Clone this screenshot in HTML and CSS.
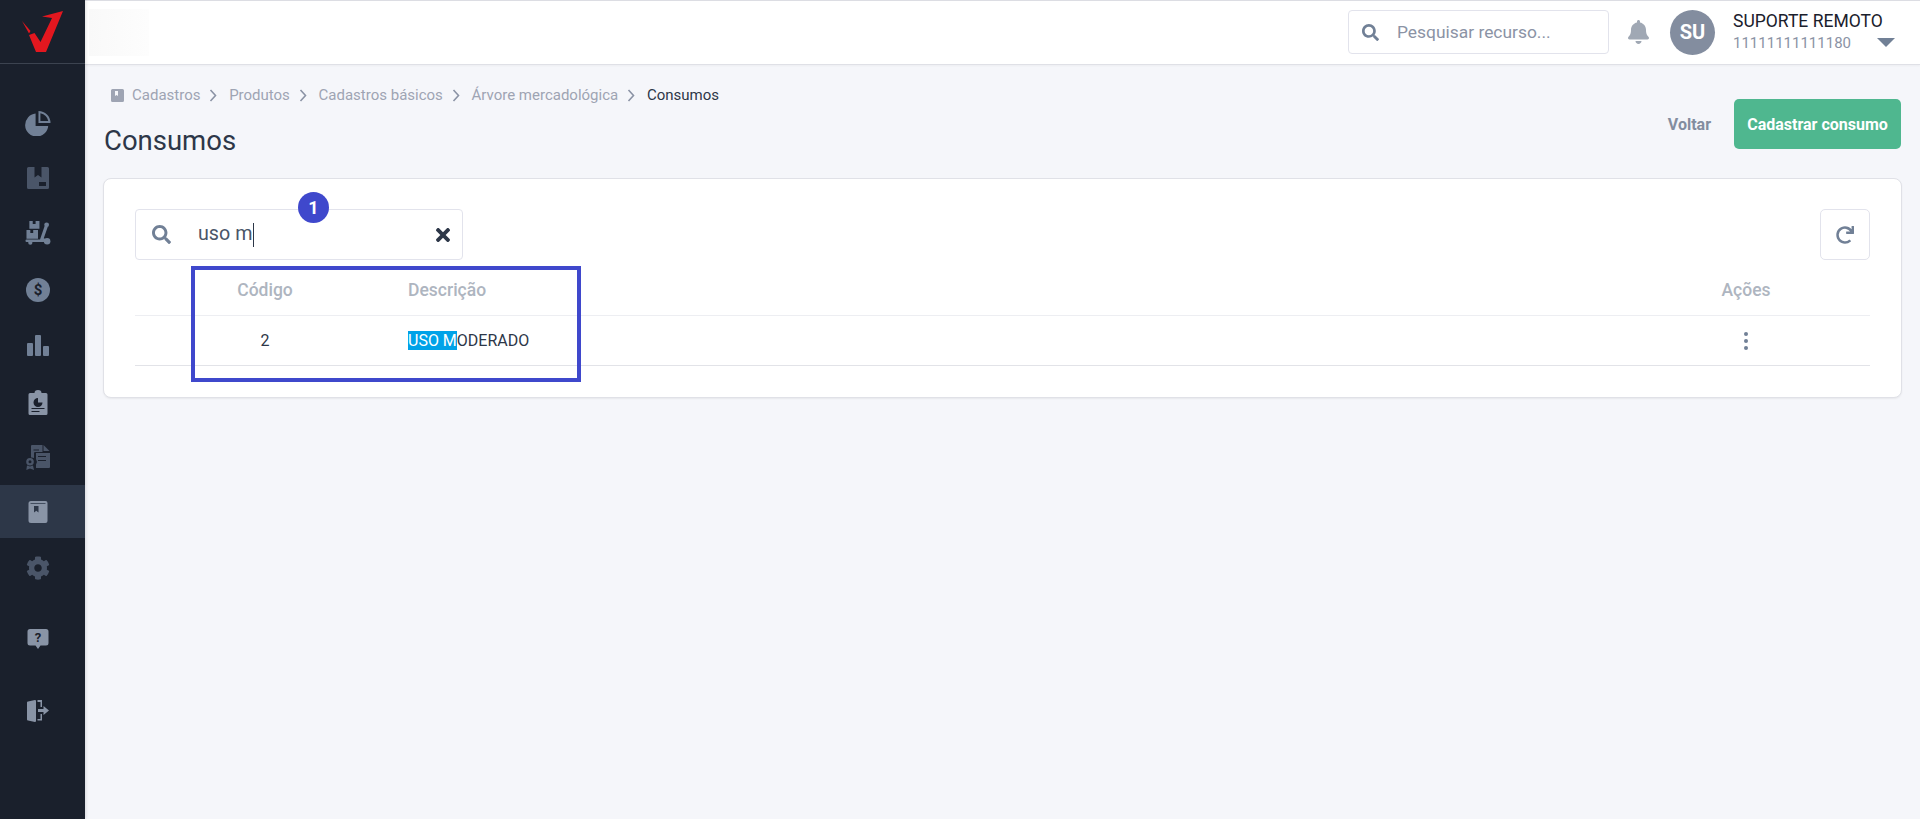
FILE: index.html
```html
<!DOCTYPE html>
<html lang="pt-BR">
<head>
<meta charset="utf-8">
<title>Consumos</title>
<link rel="stylesheet" href="styles.css">
</head>
<body>
<div class="app">
  <aside class="sidebar">
    <div class="logo">
      <svg class="logo-mark" viewBox="20 10 44 44"><path d="M22 21 L30.5 31 L29 33.5 Z"/><path d="M29 35 L36 52 L46 52 L63 11 L42 16.5 L52 18 L40.5 42 L34.5 33 Z"/></svg>
    </div>
    <nav class="nav">
      <a class="item"><svg class="ic h25 c-mid" viewBox="0 0 26 26"><path d="M10.5 2.6 A12 12 0 1 0 23.6 15.5 H10.5 Z"/><path fill-rule="evenodd" d="M13.5 0 A12.5 12.5 0 0 1 26 12.5 H13.5 Z M15.5 2.3 V10.5 H23.7 A10.5 10.5 0 0 0 15.5 2.3 Z"/></svg></a>
      <a class="item m1"><svg class="ic h22 c-dim" viewBox="0 0 22 22"><path fill-rule="evenodd" d="M1.5 0 H20.5 A1.5 1.5 0 0 1 22 1.5 V20.5 A1.5 1.5 0 0 1 20.5 22 H1.5 A1.5 1.5 0 0 1 0 20.5 V1.5 A1.5 1.5 0 0 1 1.5 0 Z M7.5 0 V10.5 L11 8 L14.5 10.5 V0 Z M12 15 V19 H19 V15 Z"/></svg></a>
      <a class="item m2"><svg class="ic h24 c-mid" viewBox="0 0 26 25"><path d="M4 0 H7.5 V3 H10.5 V0 H14.5 V8 H4 Z M1 9.5 H5 V12.5 H8 V9.5 H13 V18.5 H1 Z"/><rect x="0" y="19.3" width="20" height="2.6" rx="1"/><circle cx="5" cy="22.6" r="2.2"/><path d="M15 19.5 L20 5 L23.2 6 L19 18 L23.5 20 L22 22 Z"/><circle cx="22" cy="4" r="2.5"/><circle cx="22.5" cy="21" r="3.4"/></svg></a>
      <a class="item m4"><svg class="ic h24 c-mid" viewBox="0 0 24 24"><circle cx="12" cy="12" r="12"/><text class="dollar" x="12" y="17.2" text-anchor="middle">$</text></svg></a>
      <a class="item m3"><svg class="ic h21 c-mid" viewBox="0 0 22 21"><rect x="0" y="8" width="6" height="13" rx="1"/><rect x="8" y="0" width="6" height="21" rx="1"/><rect x="16" y="11" width="6" height="10" rx="1"/></svg></a>
      <a class="item m4"><svg class="ic h25 c-light" viewBox="0 0 19 25"><path fill-rule="evenodd" d="M1.5 3 H6 A3.5 3 0 0 1 13 3 H17.5 A1.5 1.5 0 0 1 19 4.5 V23.5 A1.5 1.5 0 0 1 17.5 25 H1.5 A1.5 1.5 0 0 1 0 23.5 V4.5 A1.5 1.5 0 0 1 1.5 3 Z M3 18 V19 H16 V18 Z M3 21 V22 H11 V21 Z M9.5 8 A4.5 4.5 0 1 0 14 12.5 H9.5 Z"/><path class="cut" d="M10.5 7.5 A4.5 4.5 0 0 1 15 12 H10.5 Z"/></svg></a>
      <a class="item m2"><svg class="ic h25 c-dim" viewBox="0 0 24 25"><path fill-rule="evenodd" d="M6 0 H16.5 V7 H9 A1.5 1.5 0 0 0 8 8 V13 A5 5 0 0 0 5 12.5 V1 A1 1 0 0 1 6 0 Z M7.5 4.5 V5.5 H13 V4.5 Z"/><path d="M17.5 0 L23.5 6 H17.5 Z"/><path fill-rule="evenodd" d="M10 8 H24 V22 A1 1 0 0 1 23 23 H10 V19.5 A5 5 0 0 0 10 14 Z M12 11 V12 H20 V11 Z M12 15 V16 H20 V15 Z"/><path fill-rule="evenodd" d="M4 13 A3.8 3.8 0 1 1 4 20.6 A3.8 3.8 0 1 1 4 13 Z M4 15.3 A1.5 1.5 0 1 0 4 18.3 A1.5 1.5 0 1 0 4 15.3 Z"/><path d="M1 20.5 L4 21.5 L7 20.5 L8 25 L4 23.5 L0.3 25 Z"/></svg></a>
      <a class="item m1 active"><svg class="ic h22 c-light" viewBox="0 0 19 22"><path fill-rule="evenodd" d="M2.5 0 H17 A2 2 0 0 1 19 2 V20 A2 2 0 0 1 17 22 H2.5 A2.5 2.5 0 0 1 0 19.5 V2.5 A2.5 2.5 0 0 1 2.5 0 Z M2 2 V2.8 H17 V2 Z M5.5 5 V11.5 L7.8 9.8 L10 11.5 V5 Z"/></svg></a>
      <a class="item m3"><svg class="ic h24 c-dim" viewBox="0 0 512 512"><path d="M487.4 315.7l-42.6-24.6c4.3-23.2 4.3-47 0-70.2l42.6-24.6c4.9-2.8 7.1-8.6 5.5-14-11.1-35.6-30-67.8-54.7-94.6-3.8-4.1-10-5.1-14.8-2.3L380.8 110c-17.9-15.4-38.5-27.3-60.8-35.1V25.8c0-5.6-3.9-10.5-9.4-11.7-36.7-8.2-74.3-7.8-109.2 0-5.5 1.2-9.4 6.1-9.4 11.7V75c-22.2 7.9-42.8 19.8-60.8 35.1L88.7 85.5c-4.9-2.8-11-1.9-14.8 2.3-24.7 26.7-43.6 58.9-54.7 94.6-1.7 5.4.6 11.2 5.5 14L67.3 221c-4.3 23.2-4.3 47 0 70.2l-42.6 24.6c-4.9 2.8-7.1 8.6-5.5 14 11.1 35.6 30 67.8 54.7 94.6 3.8 4.1 10 5.1 14.8 2.3l42.6-24.6c17.9 15.4 38.5 27.3 60.8 35.1v49.2c0 5.6 3.9 10.5 9.4 11.7 36.7 8.2 74.3 7.8 109.2 0 5.5-1.2 9.4-6.1 9.4-11.7v-49.2c22.2-7.9 42.8-19.8 60.8-35.1l42.6 24.6c4.9 2.8 11 1.9 14.8-2.3 24.7-26.7 43.6-58.9 54.7-94.6 1.5-5.5-.7-11.3-5.6-14.1zM256 336c-44.1 0-80-35.9-80-80s35.9-80 80-80 80 35.9 80 80-35.9 80-80 80z"/></svg></a>
      <a class="item m18"><svg class="ic h20 c-light" viewBox="0 0 21 20"><path d="M2.5 0 H18.5 A2.5 2.5 0 0 1 21 2.5 V14 A2.5 2.5 0 0 1 18.5 16.5 H13 L10.5 20 L8 16.5 H2.5 A2.5 2.5 0 0 1 0 14 V2.5 A2.5 2.5 0 0 1 2.5 0 Z"/><text class="help" x="10.5" y="13" text-anchor="middle">?</text></svg></a>
      <a class="item m20"><svg class="ic h22 c-light" viewBox="0 0 22 22"><path d="M1 1.5 L8 0 A1 1 0 0 1 9 1 V21 A1 1 0 0 1 8 22 L1 20.5 A1 1 0 0 1 0 19.5 V2.5 A1 1 0 0 1 1 1.5 Z"/><path d="M10.5 0 H15 V7 H13.5 V2 H10.5 Z M10.5 19 H13.5 V14 H15 V20.5 H10.5 Z"/><path d="M11 9 H16.5 V6 L22 10.5 L16.5 15 V12 H11 Z"/></svg></a>
    </nav>
  </aside>
  <div class="page">
    <header class="topbar">
      <div class="fade"></div>
      <div class="spacer"></div>
      <label class="top-search">
        <svg class="i-search" viewBox="0 0 512 512"><path d="M505 442.7L405.3 343c-4.5-4.5-10.6-7-17-7H372c27.6-35.3 44-79.7 44-128C416 93.1 322.9 0 208 0S0 93.1 0 208s93.1 208 208 208c48.3 0 92.7-16.4 128-44v16.3c0 6.4 2.5 12.5 7 17l99.7 99.7c9.4 9.4 24.6 9.4 33.9 0l28.3-28.3c9.4-9.4 9.4-24.6.1-34zM208 336c-70.7 0-128-57.2-128-128 0-70.7 57.2-128 128-128 70.7 0 128 57.2 128 128 0 70.7-57.2 128-128 128z"/></svg>
        <span>Pesquisar recurso...</span>
      </label>
      <svg class="bell" viewBox="0 0 448 512"><path d="M224 512c35.32 0 63.97-28.65 63.97-64H160.03c0 35.35 28.65 64 63.97 64zm215.39-149.71c-19.32-20.76-55.47-51.99-55.47-154.29 0-77.7-54.48-139.9-127.94-155.16V32c0-17.67-14.32-32-31.98-32s-31.98 14.33-31.98 32v20.84C118.56 68.1 64.08 130.3 64.08 208c0 102.3-36.15 133.53-55.47 154.29-6 6.45-8.66 14.16-8.61 21.71.11 16.4 12.98 32 32.1 32h383.8c19.12 0 32-15.6 32.1-32 .05-7.55-2.61-15.27-8.61-21.71z"/></svg>
      <div class="avatar">SU</div>
      <div class="user">
        <div class="user-name">SUPORTE REMOTO</div>
        <div class="user-id">11111111111180</div>
      </div>
      <div class="caret-down"></div>
    </header>
    <main class="main">
      <div class="head">
        <div>
          <ol class="crumbs">
            <li class="crumb"><svg class="crumb-book" viewBox="0 0 13 13"><path fill-rule="evenodd" d="M1.5 0 H11.5 A1.5 1.5 0 0 1 13 1.5 V11.5 A1.5 1.5 0 0 1 11.5 13 H1.5 A1.5 1.5 0 0 1 0 11.5 V1.5 A1.5 1.5 0 0 1 1.5 0 Z M4 2 V7 L5.5 6 L7 7 V2 Z"/></svg>Cadastros</li>
            <li class="crumb"><svg class="chev" viewBox="0 0 8 13"><path d="M1.5 1 L6.5 6.5 L1.5 12"/></svg>Produtos</li>
            <li class="crumb"><svg class="chev" viewBox="0 0 8 13"><path d="M1.5 1 L6.5 6.5 L1.5 12"/></svg>Cadastros básicos</li>
            <li class="crumb"><svg class="chev" viewBox="0 0 8 13"><path d="M1.5 1 L6.5 6.5 L1.5 12"/></svg>Árvore mercadológica</li>
            <li class="crumb current"><svg class="chev" viewBox="0 0 8 13"><path d="M1.5 1 L6.5 6.5 L1.5 12"/></svg>Consumos</li>
          </ol>
          <h1 class="title">Consumos</h1>
        </div>
        <div class="actions">
          <a class="back">Voltar</a>
          <a class="primary">Cadastrar consumo</a>
        </div>
      </div>
      <section class="card">
        <div class="toolbar">
          <div class="filter">
            <svg class="i-filter" viewBox="0 0 512 512"><path d="M505 442.7L405.3 343c-4.5-4.5-10.6-7-17-7H372c27.6-35.3 44-79.7 44-128C416 93.1 322.9 0 208 0S0 93.1 0 208s93.1 208 208 208c48.3 0 92.7-16.4 128-44v16.3c0 6.4 2.5 12.5 7 17l99.7 99.7c9.4 9.4 24.6 9.4 33.9 0l28.3-28.3c9.4-9.4 9.4-24.6.1-34zM208 336c-70.7 0-128-57.2-128-128 0-70.7 57.2-128 128-128 70.7 0 128 57.2 128 128 0 70.7-57.2 128-128 128z"/></svg>
            <span class="filter-text">uso m</span><span class="text-caret"></span>
            <svg class="i-clear" viewBox="0 80 352 352"><path d="M242.72 256l100.07-100.07c12.28-12.28 12.28-32.19 0-44.48l-22.24-22.24c-12.28-12.28-32.19-12.28-44.48 0L176 189.28 75.93 89.21c-12.28-12.28-32.19-12.28-44.48 0L9.21 111.45c-12.28 12.28-12.28 32.19 0 44.48L109.28 256 9.21 356.07c-12.28 12.28-12.28 32.19 0 44.48l22.24 22.24c12.28 12.28 32.2 12.28 44.48 0L176 322.72l100.07 100.07c12.28 12.28 32.2 12.28 44.48 0l22.24-22.24c12.28-12.28 12.28-32.19 0-44.48L242.72 256z"/></svg>
            <div class="badge">1</div>
          </div>
          <button class="refresh"><svg class="i-redo" viewBox="0 0 512 512"><path d="M500.33 0h-47.41a12 12 0 0 0-12 12.57l4 82.76A247.42 247.42 0 0 0 256 8C119.34 8 7.9 119.53 8 256.19 8.1 393.07 119.1 504 256 504a247.1 247.1 0 0 0 166.18-63.91 12 12 0 0 0 .48-17.43l-34-34a12 12 0 0 0-16.38-.55A176 176 0 1 1 402.1 157.8l-101.53-4.87a12 12 0 0 0-12.57 12v47.41a12 12 0 0 0 12 12h200.33a12 12 0 0 0 12-12V12a12 12 0 0 0-12-12z"/></svg></button>
        </div>
        <div class="table">
          <div class="row head-row">
            <div class="cell center">Código</div>
            <div class="cell desc">Descrição</div>
            <div class="cell center">Ações</div>
          </div>
          <div class="row body-row">
            <div class="cell center">2</div>
            <div class="cell desc"><span class="hl">USO M</span>ODERADO</div>
            <div class="cell center"><span class="dots"><i></i><i></i><i></i></span></div>
          </div>
          <div class="mark"></div>
        </div>
      </section>
    </main>
  </div>
</div>
</body>
</html>
```
FILE: styles.css
```css
* { box-sizing: border-box; }
html, body { margin: 0; padding: 0; height: 100%; overflow: hidden; }
body { background: #f5f6fa; font-family: Roboto, "Liberation Sans", sans-serif; color: #2d3748; }
.app { display: flex; height: 819px; }

.sidebar { width: 85px; flex: none; background: #1a202c; box-shadow: 1px 0 3px rgba(0,0,0,.12); position: relative; z-index: 2; }
.logo { height: 63px; border-bottom: 1px solid #3c4350; margin-top: 1px; display: flex; align-items: flex-start; }
.logo-mark { width: 44px; height: 44px; margin: 9px 0 0 20px; fill: #e3171f; }
.nav { padding-top: 33px; display: flex; flex-direction: column; }
.item { height: 53px; padding-right: 9px; display: flex; align-items: center; justify-content: center; }
.item.active { background: #2d3748; }
.m1 { margin-top: 1px; }
.m2 { margin-top: 2px; }
.m3 { margin-top: 3px; }
.m4 { margin-top: 4px; }
.m18 { margin-top: 18px; }
.m20 { margin-top: 19px; }
.ic { width: 26px; }
.h25 { height: 25px; }
.h24 { height: 24px; }
.h22 { height: 22px; }
.h21 { height: 21px; }
.h20 { height: 20px; }
.c-mid { fill: #718096; }
.c-dim { fill: #4a5568; }
.c-light { fill: #8994a6; }
.cut { fill: #8994a6; }
.dollar { font: 700 15px Roboto, sans-serif; fill: #1a202c; }
.help { font: 700 13px Roboto, sans-serif; fill: #1a202c; }

.page { flex: 1; min-width: 0; display: flex; flex-direction: column; }
.topbar { height: 65px; flex: none; background: #fff; border-top: 1px solid #dcdde3; border-bottom: 1px solid #dfe0e6; box-shadow: 0 1px 2px rgba(0,0,0,.04); display: flex; align-items: center; padding-bottom: 1px; }
.fade { width: 60px; height: 47px; margin-left: 4px; background: linear-gradient(90deg, #f9f9f9, #fdfdfd); }
.spacer { flex: 1; }
.top-search { width: 261px; height: 44px; border: 1px solid #e2e3ec; border-radius: 4px; display: flex; align-items: center; padding-left: 13px; font-size: 17.4px; color: #8b93a5; }
.i-search { width: 17px; height: 17px; fill: #718096; margin-right: 18px; }
.bell { width: 21px; height: 24px; fill: #a0a8b4; margin-left: 19px; }
.avatar { width: 45px; height: 45px; border-radius: 50%; background: #838d9f; color: #fff; font-weight: 700; font-size: 20px; display: flex; align-items: center; justify-content: center; margin-left: 21px; }
.user { margin-left: 18px; width: 144px; line-height: 1; }
.user-name { font-size: 17.5px; color: #1a202c; margin-bottom: 6px; white-space: nowrap; }
.user-id { font-size: 15px; color: #8b93a5; }
.caret-down { width: 0; height: 0; border-left: 9px solid transparent; border-right: 9px solid transparent; border-top: 9px solid #718096; margin: 21px 25px 0 0; }

.main { padding: 20px 19px 0; flex: 1; }
.head { display: flex; justify-content: space-between; align-items: flex-start; }
.crumbs { list-style: none; margin: 0; padding: 0 0 0 7px; display: flex; height: 20px; align-items: center; font-size: 15px; color: #9ea4b3; }
.crumb { display: flex; align-items: center; }
.current { color: #2d3748; }
.crumb-book { width: 13px; height: 13px; fill: #9ea4b3; margin-right: 8px; }
.chev { width: 8px; height: 13px; fill: none; stroke: #8b93a5; stroke-width: 1.6; margin: 0 11.7px 0 9px; }
.title { font-size: 27.5px; font-weight: 400; line-height: 40px; margin: 16px 0 0; color: #2d3748; }
.actions { display: flex; align-items: center; margin-top: 14px; }
.back { font-size: 16px; font-weight: 700; color: #838d9f; margin-right: 23px; }
.primary { height: 50px; width: 167px; border-radius: 5px; background: #4fb78f; color: #fff; font-size: 16px; font-weight: 700; display: flex; align-items: center; justify-content: center; }

.card { margin: 17px -1px 0 -1px; height: 220px; background: #fff; border: 1px solid #e0e1e7; border-radius: 8px; box-shadow: 0 1px 2px rgba(0,0,0,.06); padding: 30px 31px 0; }
.toolbar { display: flex; justify-content: space-between; height: 51px; }
.filter { position: relative; width: 328px; height: 51px; border: 1px solid #e2e3ec; border-radius: 4px; display: flex; align-items: center; padding-left: 16px; }
.i-filter { width: 19px; height: 19px; fill: #718096; margin-right: 27px; }
.filter-text { font-size: 19.7px; line-height: 24px; margin-top: -2px; color: #4a5568; }
.text-caret { width: 1px; height: 24px; background: #2d3748; margin-left: 1px; }
.i-clear { width: 14px; height: 14px; fill: #2d3748; margin-left: auto; margin-right: 12px; }
.badge { position: absolute; left: 162px; top: -18px; width: 31px; height: 31px; border-radius: 50%; background: #3f48cc; color: #fff; font-size: 18px; font-weight: 700; display: flex; align-items: center; justify-content: center; }
.refresh { width: 50px; height: 51px; background: #fff; border: 1px solid #e2e3ec; border-radius: 5px; padding: 0; display: flex; align-items: center; justify-content: center; }
.i-redo { width: 18px; height: 18px; fill: #718096; }

.table { position: relative; margin-top: 5px; }
.row { display: grid; grid-template-columns: 260px 1fr 248px; align-items: center; }
.head-row { height: 51px; border-bottom: 1px solid #edeef2; color: #aeb5c0; font-size: 17.5px; font-weight: 500; }
.body-row { height: 50px; border-bottom: 1px solid #e2e3e8; color: #2d3748; font-size: 16px; }
.center { text-align: center; }
.desc { padding-left: 13px; }
.hl { background: #00a2e8; color: #fff; }
.dots { display: inline-flex; flex-direction: column; gap: 3px; vertical-align: middle; }
.dots i { width: 4px; height: 4px; border-radius: 50%; background: #718096; }
.mark { position: absolute; left: 56px; top: 1px; width: 390px; height: 116px; border: 4px solid #3f48cc; }
```
